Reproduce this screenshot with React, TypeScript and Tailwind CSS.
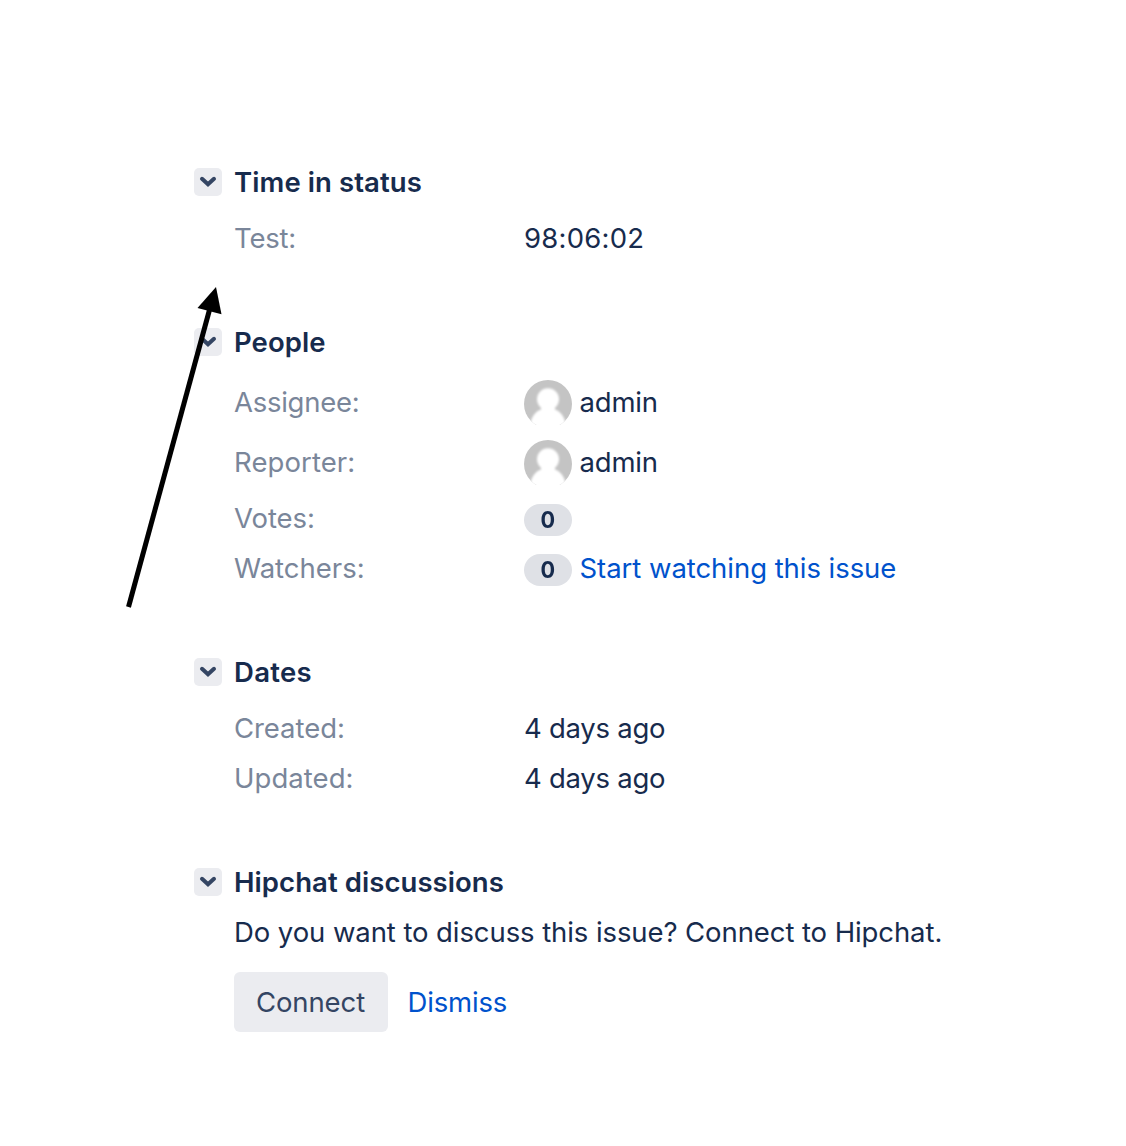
import type { ReactNode } from 'react';

function Toggle() {
  return (
    <button aria-label="Toggle section" className="mr-3 flex size-7 shrink-0 items-center justify-center rounded-[5px] bg-[#ebecf0]">
      <svg viewBox="0 0 28 28" className="size-7" fill="none" stroke="#344563" strokeWidth="4" strokeLinecap="round" strokeLinejoin="miter">
        <path d="M8 10.8 14 16.300 20 10.8" />
      </svg>
    </button>
  );
}

function Section({ title, tracking, className = '', children }: { title: string; tracking: string; className?: string; children: ReactNode }) {
  return (
    <section className={className}>
      <div className="flex h-10 items-center">
        <Toggle />
        <h2 className={`font-semibold ${tracking}`}>{title}</h2>
      </div>
      <div className="pl-10">{children}</div>
    </section>
  );
}

function Row({ label, tracking, className, children }: { label: string; tracking: string; className: string; children: ReactNode }) {
  return (
    <div className={`flex h-10 items-center ${className}`}>
      <span className={`w-[290px] shrink-0 text-[#7a869a] ${tracking}`}>{label}</span>
      {children}
    </div>
  );
}

function User() {
  return (
    <>
      <svg viewBox="0 0 48 48" className="relative top-0.5 mr-[7.5px] size-12 shrink-0">
        <defs>
          <clipPath id="avatar-circle"><circle cx="24" cy="24" r="24" /></clipPath>
          <filter id="avatar-soft" x="-20%" y="-20%" width="140%" height="140%"><feGaussianBlur stdDeviation="0.9" /></filter>
        </defs>
        <g clipPath="url(#avatar-circle)">
          <rect width="48" height="45" fill="#c4c4c4" />
          <g fill="#fff" filter="url(#avatar-soft)">
            <ellipse cx="24" cy="19.3" rx="11" ry="11" />
            <path d="M17 27h14v2.500c5 2 8.500 6 10 11.500l1 12H6l1-12c1.500-5.500 5-9.500 10-11.500Z" />
          </g>
        </g>
      </svg>
      <span className="tracking-[-0.18px]">admin</span>
    </>
  );
}

function Badge() {
  return (
    <span className="relative top-0.5 mr-[7.5px] flex h-8 w-12 shrink-0 items-center justify-center rounded-full bg-[#dfe1e6] text-[23px] font-bold">
      <span className="-mt-px scale-x-[0.94]">0</span>
    </span>
  );
}

export default function App() {
  return (
    <main className="relative h-[1146px] w-[1126px] overflow-hidden bg-white pt-[162px] pl-[194px] font-[Inter,sans-serif] text-[27.5px] leading-10 whitespace-nowrap text-[#172b4d]">
      <Section title="Time in status" tracking="tracking-[0.09px]" className="h-40">
        <Row label="Test:" tracking="tracking-[-0.2px]" className="mt-4"><span className="tracking-[0.22px]">98:06:02</span></Row>
      </Section>
      <Section title="People" tracking="tracking-[0.06px]" className="h-[330px]">
        <Row label="Assignee:" tracking="tracking-[-0.26px]" className="mt-5"><User /></Row>
        <Row label="Reporter:" tracking="tracking-[0.09px]" className="mt-5"><User /></Row>
        <Row label="Votes:" tracking="tracking-[-0.06px]" className="mt-4"><Badge /></Row>
        <Row label="Watchers:" tracking="tracking-[-0.01px]" className="mt-2.5"><Badge /><a className="tracking-[-0.05px] text-[#0052cc]">Start watching this issue</a></Row>
      </Section>
      <Section title="Dates" tracking="tracking-[0.3px]" className="h-[210px]">
        <Row label="Created:" tracking="tracking-[-0.06px]" className="mt-4"><span className="tracking-[-0.26px]">4 days ago</span></Row>
        <Row label="Updated:" tracking="tracking-[0.06px]" className="mt-2.5"><span className="tracking-[-0.26px]">4 days ago</span></Row>
      </Section>
      <Section title="Hipchat discussions" tracking="tracking-[0.07px]">
        <p className="mt-2.5 tracking-[-0.085px]">Do you want to discuss this issue? Connect to Hipchat.</p>
        <div className="mt-5 flex items-center">
          <button className="mr-[19.5px] h-[60px] w-[154px] rounded-md bg-[#ebecf0] pr-px tracking-[-0.1px] text-[#344563]">Connect</button>
          <a className="tracking-[-0.17px] text-[#0052cc]">Dismiss</a>
        </div>
      </Section>
      <svg viewBox="0 0 110 330" className="pointer-events-none absolute top-[282px] left-[120px] h-[330px] w-[110px]">
        <path d="M8.500 325 90 26" stroke="#000" strokeWidth="5" />
        <path d="M96 5 77.500 26 101.500 32.200Z" />
      </svg>
    </main>
  );
}
